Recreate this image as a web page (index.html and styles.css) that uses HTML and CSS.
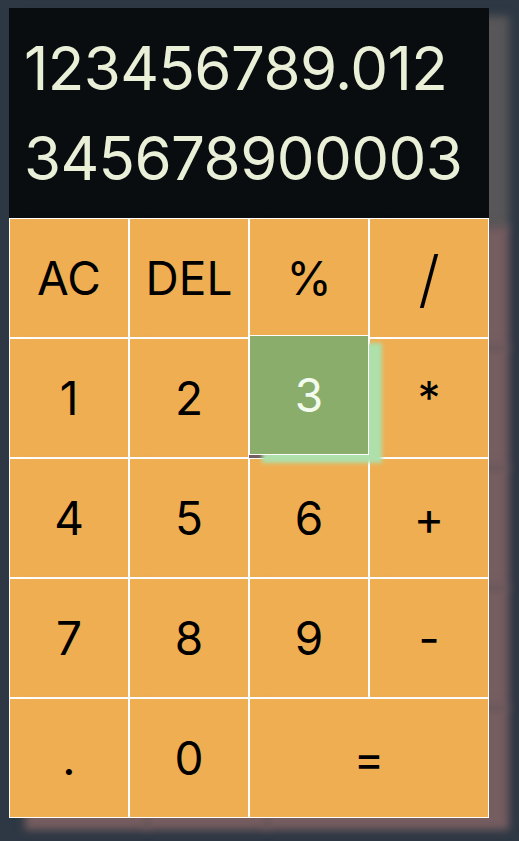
FILE: index.html
```html
<!DOCTYPE html>
<html lang="en">
<head>
<meta charset="utf-8">
<title>Calculator</title>
<link rel="stylesheet" href="styles.css">
</head>
<body>
<div class="calculator">
  <div class="display">
    <div class="operand previous">123456789.012</div>
    <div class="operand current">345678900003</div>
  </div>
  <button class="key">AC</button>
  <button class="key">DEL</button>
  <button class="key">%</button>
  <button class="key key-slash">/</button>
  <button class="key">1</button>
  <button class="key">2</button>
  <button class="key is-hover">3</button>
  <button class="key">*</button>
  <button class="key">4</button>
  <button class="key">5</button>
  <button class="key">6</button>
  <button class="key">+</button>
  <button class="key">7</button>
  <button class="key">8</button>
  <button class="key">9</button>
  <button class="key">-</button>
  <button class="key">.</button>
  <button class="key">0</button>
  <button class="key span-two">=</button>
</div>
</body>
</html>
```

FILE: styles.css
```css
* {
  box-sizing: border-box;
}

html, body {
  margin: 0;
  background: #2e3844;
}

body {
  padding: 8px 0 0 9px;
  min-height: 841px;
  font-family: "Inter", "DejaVu Sans", sans-serif;
}

.calculator {
  display: grid;
  grid-template-columns: repeat(4, 120px);
  grid-template-rows: 210px repeat(5, 120px);
  width: 480px;
}

.display {
  grid-column: 1 / -1;
  background: #0a0d10;
  padding: 15px 0 0 15px;
  box-shadow: 18px 10px 8px 2px #585658;
}

.operand {
  color: #eaf0d8;
  font-size: 60px;
  line-height: 90px;
  font-weight: 400;
  letter-spacing: -0.6px;
  white-space: nowrap;
}

.key {
  font-family: inherit;
  font-size: 46px;
  font-weight: 400;
  color: #000;
  background: #efae52;
  border: 1px solid #ffffff;
  margin: 0;
  padding: 0;
  cursor: pointer;
  box-shadow: 18px 10px 8px 2px #755d60;
}

.key-slash {
  font-size: 62px;
  font-weight: 300;
}

.span-two {
  grid-column: span 2;
}

.is-hover {
  background: #8aad6b;
  color: #f3faee;
  transform: translateY(-3px);
  box-shadow: 13px 8px 4px #aee0ab;
}
```
